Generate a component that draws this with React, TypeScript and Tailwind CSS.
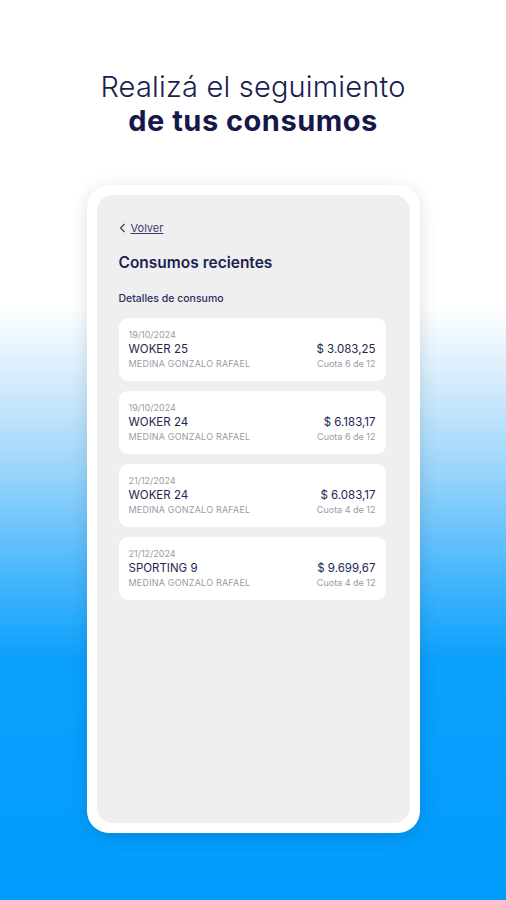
import React from "react";

type Consumo = {
  fecha: string;
  comercio: string;
  titular: string;
  monto: string;
  cuota: string;
};

const consumos: Consumo[] = [
  { fecha: "19/10/2024", comercio: "WOKER 25", titular: "MEDINA GONZALO RAFAEL", monto: "$ 3.083,25", cuota: "Cuota 6 de 12" },
  { fecha: "19/10/2024", comercio: "WOKER 24", titular: "MEDINA GONZALO RAFAEL", monto: "$ 6.183,17", cuota: "Cuota 6 de 12" },
  { fecha: "21/12/2024", comercio: "WOKER 24", titular: "MEDINA GONZALO RAFAEL", monto: "$ 6.083,17", cuota: "Cuota 4 de 12" },
  { fecha: "21/12/2024", comercio: "SPORTING 9", titular: "MEDINA GONZALO RAFAEL", monto: "$ 9.699,67", cuota: "Cuota 4 de 12" },
];

function ConsumoCard({ c }: { c: Consumo }) {
  return (
    <div className="flex h-[63px] flex-col justify-center rounded-[9px] bg-white px-[10px]">
      <p className="text-[9px] leading-[12px] text-[#9a9ca3]">{c.fecha}</p>
      <div className="flex items-center justify-between">
        <span className="text-[11.5px] leading-[16px] text-[#22264f]">{c.comercio}</span>
        <span className="text-[11.5px] leading-[16px] text-[#22264f]">{c.monto}</span>
      </div>
      <div className="flex items-center justify-between">
        <span className="text-[9px] leading-[13px] tracking-[0.2px] text-[#9a9ca3]">{c.titular}</span>
        <span className="text-[9px] leading-[13px] text-[#9a9ca3]">{c.cuota}</span>
      </div>
    </div>
  );
}

export default function App() {
  return (
    <div className="flex h-[900px] w-full flex-col items-center bg-[linear-gradient(to_bottom,#ffffff_0px,#ffffff_305px,#d6ecfc_380px,#9ad5fb_470px,#4cb8fc_570px,#0ba0fd_660px,#009cfd_900px)] font-['Inter',sans-serif]">
      {/* Titulo */}
      <div className="mt-[70px] text-center text-[#1a1d50]">
        <h1 className="text-[29px] font-light leading-[34px] tracking-[0.2px]">Realizá el seguimiento</h1>
        <h2 className="text-[29px] font-bold leading-[34px] tracking-[0.5px] text-[#15184a]">de tus consumos</h2>
      </div>

      {/* Telefono */}
      <div className="mt-[47px] h-[648px] w-[333px] rounded-[22px] bg-white p-[10px] shadow-[0_4px_18px_rgba(0,0,0,0.13)]">
        <div className="h-full rounded-[16px] bg-[#efefef] pl-[22px] pr-[24px] pt-[26px]">
          <div className="flex items-center gap-[5px] text-[#3a3e66]">
            <svg width="7" height="10" viewBox="0 0 7 10" fill="none">
              <path d="M5.5 1L1.5 5L5.5 9" stroke="currentColor" strokeWidth="1.2" />
            </svg>
            <span className="text-[11px] leading-[14px] underline">Volver</span>
          </div>
          <p className="mt-[18px] text-[15.5px] font-semibold leading-[20px] text-[#1b1f52]">Consumos recientes</p>
          <p className="mt-[19px] text-[10.5px] font-medium leading-[14px] text-[#2c3060]">Detalles de consumo</p>
          <div className="mt-[12px] flex flex-col gap-[10px]">
            {consumos.map((c, i) => (
              <ConsumoCard key={i} c={c} />
            ))}
          </div>
        </div>
      </div>
    </div>
  );
}
